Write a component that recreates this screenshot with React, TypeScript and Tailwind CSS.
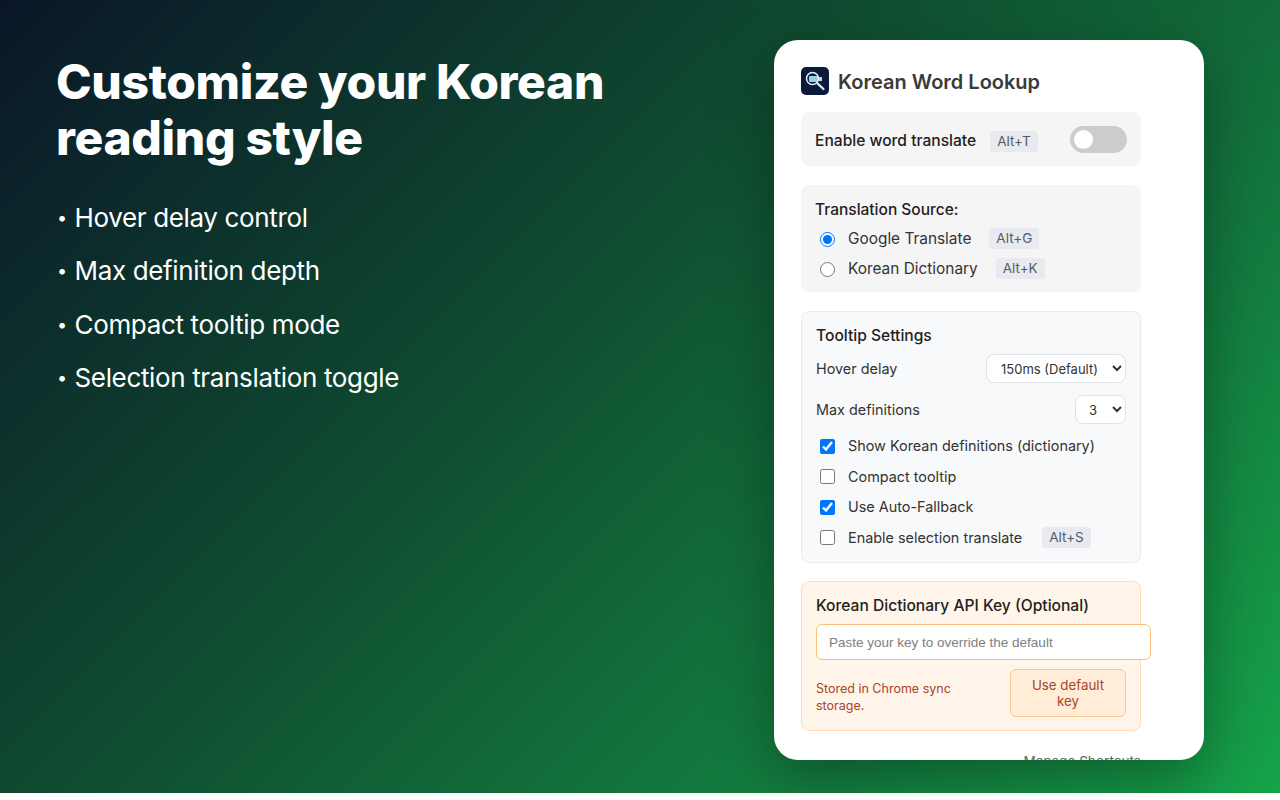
const kbd = "rounded-[4px] bg-[#e8eaef] px-[7px] py-[2px] text-[13.5px] leading-[17px] text-[#555b66]";

const features = ["Hover delay control", "Max definition depth", "Compact tooltip mode", "Selection translation toggle"];

const LookupIcon = () => (
	<svg viewBox="0 0 28 28" className="h-[28px] w-[28px]">
		<rect width="28" height="28" rx="5" fill="#0b1a3c" />
		<rect x="8" y="9" width="9" height="6" rx="1" fill="#8fd3e8" />
		<rect x="18" y="10" width="3" height="4" rx="0.5" fill="#c9d3dc" />
		<circle cx="11.5" cy="11.5" r="6" fill="none" stroke="#eef2f6" strokeWidth="1.5" />
		<path d="M16.5 16.5 L22.5 22" stroke="#eef2f6" strokeWidth="2.2" strokeLinecap="round" />
	</svg>
);

const CheckRow = ({ label, checked, shortcut }: { label: string; checked?: boolean; shortcut?: string }) => (
	<label className="flex h-[30.5px] items-center text-[14.4px] text-[#333]">
		<input type="checkbox" defaultChecked={checked} className="ml-[4px] mr-[13px] h-[15px] w-[15px]" />
		<span>{label}</span>
		{shortcut && <span className={`ml-[20px] ${kbd}`}>{shortcut}</span>}
	</label>
);

const App = () => {
	return (
		<div className="font-['Inter',sans-serif]">
			<div className="flex h-[793px] w-[1280px] justify-between overflow-hidden bg-[linear-gradient(135deg,#0a1628_0%,#0f4a30_40%,#16a34a_100%)]">
				<div className="pl-[56px] pt-[54px] text-white">
					<h1 className="w-[600px] text-[48px] font-extrabold leading-[56px] tracking-[-0.35px]">
						Customize your Korean reading style
					</h1>
					<ul className="mt-[34px] flex flex-col gap-[17.3px] text-[26px] leading-[36px] tracking-[-0.35px]">
						{features.map((f) => (
							<li key={f} className="flex">
								<span className="w-[18.5px] pl-[1px] text-[18px]">•</span>
								<span>{f}</span>
							</li>
						))}
					</ul>
				</div>

				<div className="mr-[76px] mt-[40px] h-[720px] w-[430px] overflow-hidden rounded-[24px] bg-white pl-[27px] shadow-[0_20px_60px_rgba(0,0,0,0.35)]">
					<div className="w-[340px]">
						<div className="mt-[27px] flex h-[28px] items-center gap-[9px]">
							<LookupIcon />
							<span className="mt-[2px] text-[20px] font-semibold text-[#3a3a3a]">Korean Word Lookup</span>
						</div>

						<div className="mt-[17px] flex h-[54px] items-center rounded-[8px] bg-[#f5f5f5] pl-[14px] pr-[14px]">
							<span className="mt-[4px] text-[15.6px] font-medium text-[#222]">Enable word translate</span>
							<span className={`ml-[14px] mt-[4px] ${kbd}`}>Alt+T</span>
							<div className="ml-auto flex h-[27px] w-[57px] items-center rounded-full bg-[#cccccc] pl-[4px]">
								<div className="h-[19px] w-[19px] rounded-full bg-white" />
							</div>
						</div>

						<div className="mt-[19px] h-[107px] rounded-[8px] bg-[#f5f5f5] pl-[14px] pt-[15px]">
							<div className="text-[15.5px] font-medium leading-[20px] text-[#222]">Translation Source:</div>
							<label className="mt-[3px] flex h-[30.5px] items-center text-[15.4px] text-[#333]">
								<input type="radio" name="source" defaultChecked className="ml-[5px] mr-[13px] mt-[2px] h-[15px] w-[15px]" />
								<span>Google Translate</span>
								<span className={`ml-[18px] ${kbd}`}>Alt+G</span>
							</label>
							<label className="flex h-[30.5px] items-center text-[15.4px] text-[#333]">
								<input type="radio" name="source" className="ml-[5px] mr-[13px] mt-[2px] h-[15px] w-[15px]" />
								<span>Korean Dictionary</span>
								<span className={`ml-[18px] ${kbd}`}>Alt+K</span>
							</label>
						</div>

						<div className="mt-[19px] h-[252px] rounded-[8px] border border-[#e8eaee] bg-[#f8f9fb] pl-[14px] pr-[14px] pt-[14px]">
							<div className="text-[15.6px] font-medium leading-[20px] text-[#222]">Tooltip Settings</div>
							<div className="mt-[8px] flex h-[29px] items-center justify-between text-[14.4px] text-[#333]">
								<span>Hover delay</span>
								<select defaultValue="150" className="h-[29px] w-[140px] rounded-[8px] border border-[#dfe2e7] bg-white pl-[10px] text-[13px] text-[#333]">
									<option value="150">150ms (Default)</option>
								</select>
							</div>
							<div className="mt-[12px] flex h-[29px] items-center justify-between text-[14.4px] text-[#333]">
								<span>Max definitions</span>
								<select defaultValue="3" className="h-[29px] w-[51px] rounded-[8px] border border-[#dfe2e7] bg-white pl-[9px] text-[13px] text-[#333]">
									<option value="3">3</option>
								</select>
							</div>
							<div className="mt-[7px]">
								<CheckRow label="Show Korean definitions (dictionary)" checked />
								<CheckRow label="Compact tooltip" />
								<CheckRow label="Use Auto-Fallback" checked />
								<CheckRow label="Enable selection translate" shortcut="Alt+S" />
							</div>
						</div>

						<div className="mt-[18px] h-[150px] rounded-[8px] border border-[#ffdcb4] bg-[#fff5ea] pl-[14px] pr-[14px] pt-[14px]">
							<div className="text-[15.6px] font-medium leading-[20px] text-[#222]">Korean Dictionary API Key (Optional)</div>
							<input
								placeholder="Paste your key to override the default"
								className="mt-[8px] h-[36px] w-[335px] rounded-[6px] border border-[#ffbe78] bg-white px-[12px] font-['Liberation_Sans',sans-serif] text-[13.5px] outline-none placeholder:text-[#808080]"
							/>
							<div className="mt-[9px] flex items-center justify-between">
								<p className="mt-[8px] w-[150px] text-[12.5px] leading-[17px] text-[#a8442a]">Stored in Chrome sync storage.</p>
								<button className="h-[48px] w-[116px] rounded-[6px] border border-[#ffc78c] bg-[#ffedd8] px-[16px] text-[13.3px] leading-[16px] text-[#a8442a]">
									Use default key
								</button>
							</div>
						</div>

						<div className="mt-[20px] text-right text-[13.6px] text-[#666]">Manage Shortcuts</div>
					</div>
				</div>
			</div>
		</div>
	);
};

export default App;
